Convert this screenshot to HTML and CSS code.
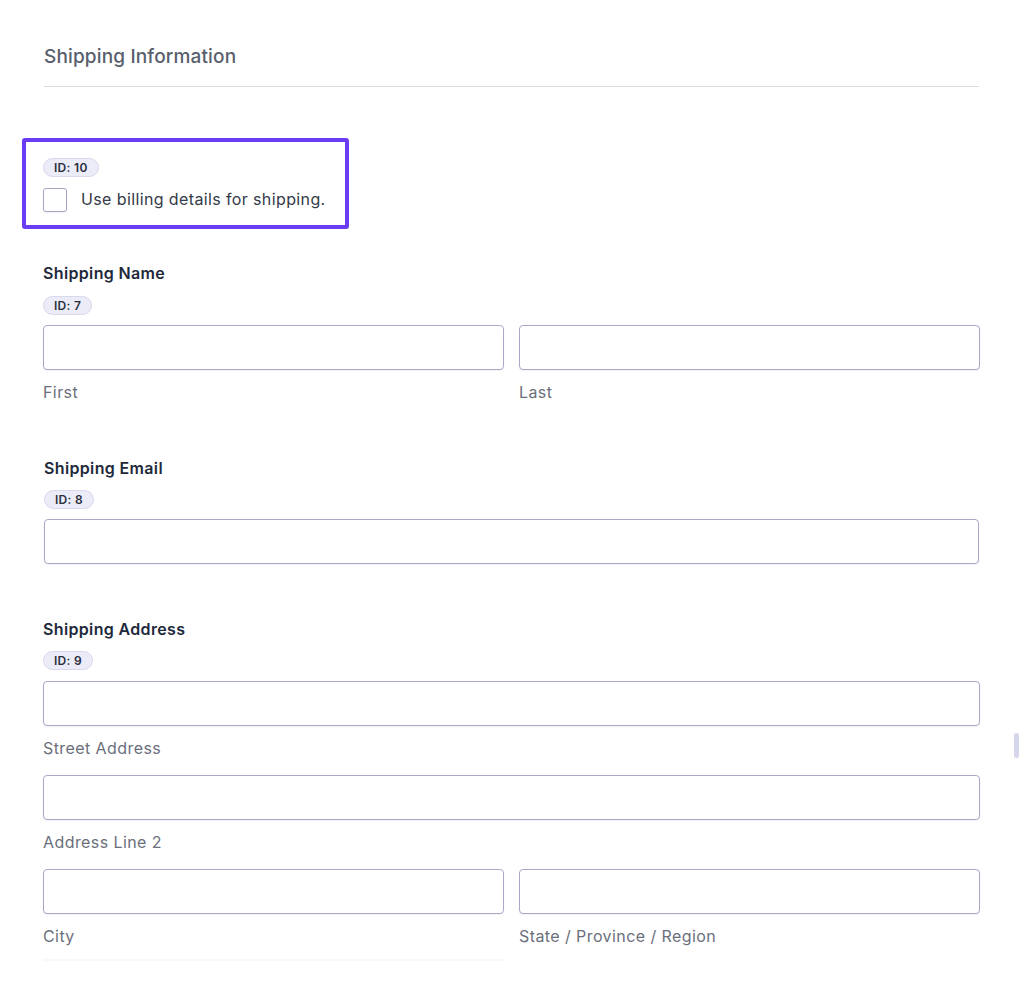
FILE: index.html
```html
<!DOCTYPE html>
<html>
<head>
<meta charset="utf-8">
<link rel="stylesheet" href="styles.css">
</head>
<body>
<div class="page">
  <h2 class="section-title">Shipping Information</h2>
  <div class="divider"></div>

  <div class="highlight">
    <span class="badge">ID: 10</span>
    <label class="check-row">
      <span class="checkbox"></span>
      <span class="check-text">Use billing details for shipping.</span>
    </label>
  </div>

  <div class="field field-name">
    <div class="label">Shipping Name</div>
    <span class="badge">ID: 7</span>
    <div class="row">
      <div class="col">
        <div class="input"></div>
        <div class="sub">First</div>
      </div>
      <div class="col">
        <div class="input"></div>
        <div class="sub">Last</div>
      </div>
    </div>
  </div>

  <div class="field field-email">
    <div class="label">Shipping Email</div>
    <span class="badge">ID: 8</span>
    <div class="input"></div>
  </div>

  <div class="field field-address">
    <div class="label">Shipping Address</div>
    <span class="badge">ID: 9</span>
    <div class="input first-input"></div>
    <div class="sub">Street Address</div>
    <div class="input gap-top"></div>
    <div class="sub">Address Line 2</div>
    <div class="row gap-top">
      <div class="col">
        <div class="input"></div>
        <div class="sub">City</div>
        <div class="faint"></div>
      </div>
      <div class="col">
        <div class="input"></div>
        <div class="sub">State / Province / Region</div>
      </div>
    </div>
  </div>
</div>
<div class="scroll-thumb"></div>
</body>
</html>
```

FILE: styles.css
```css
* { box-sizing: border-box; }
html, body {
  margin: 0;
  padding: 0;
  background: #ffffff;
}
body {
  font-family: Inter, "Noto Sans", sans-serif;
  color: #1f2937;
  width: 1024px;
  height: 996px;
  overflow: hidden;
  position: relative;
}
.page {
  padding: 45px 0 0 43px;
  width: 980px;
}
.section-title {
  margin: 0;
  padding-left: 1px;
  font-size: 19px;
  line-height: 24px;
  font-weight: 500;
  color: #585e6c;
  letter-spacing: 0.15px;
}
.divider {
  margin: 17px 0 0 1px;
  height: 1px;
  width: 935px;
  background: #dcdce0;
}
.highlight {
  margin: 51px 0 0 -21px;
  width: 327px;
  border: 4px solid #6a3cf4;
  border-radius: 3px;
  padding: 16px 0 13px 17px;
}
.badge {
  display: inline-block;
  height: 19px;
  line-height: 17px;
  padding: 0 10px;
  font-size: 12px;
  font-weight: 600;
  color: #2a2f3c;
  background: #ecebf8;
  border: 1px solid #d9d8ee;
  border-radius: 10px;
  vertical-align: top;
  letter-spacing: 0.3px;
}
.check-row {
  display: flex;
  align-items: center;
  margin-top: 10px;
  height: 24px;
}
.checkbox {
  width: 24px;
  height: 24px;
  border: 1px solid #a4a4c4;
  border-radius: 3px;
  background: #fff;
  box-shadow: 0 1px 2px rgba(0,0,0,0.06);
}
.check-text {
  margin-left: 14px;
  font-size: 16px;
  line-height: 22px;
  color: #333a48;
  letter-spacing: 0.38px;
  position: relative;
  top: -1px;
}
.field { display: flex; flex-direction: column; align-items: flex-start; }
.field-name { margin-top: 34px; }
.field-email { margin-top: 56px; padding: 0 1px 0 1px; }
.field-address { margin-top: 55px; }
.label {
  font-size: 16px;
  line-height: 20px;
  font-weight: 600;
  color: #1e293b;
  margin-bottom: 13px;
  letter-spacing: 0.35px;
}
.field-email .label, .field-address .label { margin-bottom: 12px; }
.input {
  margin-top: 10px;
  width: 100%;
  height: 45px;
  border: 1px solid #a8a9c8;
  border-radius: 4px;
  background: #fff;
  box-shadow: 0 1px 2px rgba(20,20,60,0.06);
}
.input.first-input { margin-top: 11px; }
.row {
  display: flex;
  gap: 15px;
  width: 100%;
}
.col {
  flex: 1;
  display: flex;
  flex-direction: column;
}
.sub {
  margin-top: 12px;
  font-size: 16px;
  line-height: 20px;
  color: #6b6f7c;
  letter-spacing: 0.42px;
}
.input.gap-top { margin-top: 17px; }
.row.gap-top { margin-top: 7px; }
.row.gap-top .input { margin-top: 10px; }
.faint {
  margin-top: 13px;
  height: 2px;
  background: #f8f8fa;
}
.scroll-thumb {
  position: absolute;
  left: 1014px;
  top: 733px;
  width: 5px;
  height: 25px;
  border-radius: 3px;
  background: #d5d5ec;
}
```
